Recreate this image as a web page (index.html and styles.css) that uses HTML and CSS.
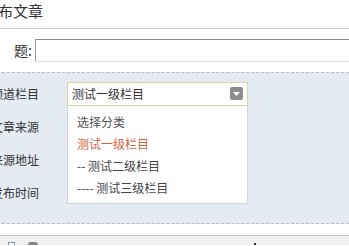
FILE: index.html
```html
<!DOCTYPE html>
<html lang="zh-CN">
<head>
<meta charset="utf-8">
<title>发布文章</title>
<link rel="stylesheet" href="styles.css">
</head>
<body>
<div class="page">
  <div class="header"><h1 class="title">发布文章</h1></div>
  <div class="title-row">
    <label class="title-label">标　题:</label>
    <div class="title-input"></div>
  </div>
  <div class="section">
    <div class="row">
      <span class="label">频道栏目</span>
      <div class="select-wrap">
        <div class="select">
          <span class="select-text">测试一级栏目</span>
          <span class="select-btn"><svg width="7" height="4" viewBox="0 0 7 4"><path d="M0 0H7L3.5 4Z" fill="#fff"/></svg></span>
        </div>
        <ul class="dropdown">
          <li class="opt opt-placeholder">选择分类</li>
          <li class="opt opt-active">测试一级栏目</li>
          <li class="opt">-- 测试二级栏目</li>
          <li class="opt">---- 测试三级栏目</li>
        </ul>
      </div>
    </div>
    <div class="row"><span class="label">文章来源</span></div>
    <div class="row"><span class="label">来源地址</span></div>
    <div class="row"><span class="label">发布时间</span></div>
  </div>
  <div class="gap"></div>
  <div class="toolbar">
    <span class="tb-icon tb-doc"></span>
    <span class="tb-icon tb-dark"></span>
    <span class="tb-spacer"></span>
    <span class="tb-dot"></span>
  </div>
</div>
</body>
</html>
```
FILE: styles.css
```css
html, body {
  margin: 0;
  padding: 0;
  background: #fff;
}
body {
  width: 349px;
  height: 246px;
  overflow: hidden;
  font-family: "Noto Sans CJK SC", "Liberation Sans", sans-serif;
  color: #333;
}
.page {
  margin-left: -18px;
  width: 367px;
  overflow: hidden;
}
.header {
  height: 28px;
  border-bottom: 1px solid #cfcfcf;
}
.title {
  margin: 0;
  padding-left: 1px;
  font-size: 15px;
  font-weight: normal;
  line-height: 22px;
  color: #333;
}
.title-row {
  display: flex;
  align-items: center;
  padding: 10px 0;
}
.title-label {
  width: 50px;
  text-align: right;
  font-size: 14px;
  line-height: 23px;
  color: #333;
  white-space: nowrap;
  flex: none;
}
.title-input {
  margin-left: 3px;
  flex: 1;
  margin-right: -4px;
  height: 23px;
  box-sizing: border-box;
  border: 1px solid #e0e0e0;
  border-top-color: #8a8a8a;
  border-left-color: #9a9a9a;
  background: #fff;
}
.section {
  border-top: 1px dashed #b9c3ce;
  border-bottom: 1px dashed #b9c3ce;
  background: #e4ebf2;
  padding: 4px 0 14px;
}
.row {
  display: flex;
  align-items: center;
  height: 33px;
}
.label {
  width: 57px;
  text-align: right;
  font-size: 12px;
  color: #333;
  flex: none;
}
.select-wrap {
  position: relative;
  margin-left: 28px;
}
.select {
  width: 181px;
  height: 24px;
  box-sizing: border-box;
  border: 1px solid #dbd3a3;
  background: #fff;
  display: flex;
  align-items: center;
  justify-content: space-between;
  padding: 0 4px 0 4px;
}
.select-text {
  font-size: 12px;
  color: #333;
}
.select-btn {
  width: 13px;
  height: 13px;
  border-radius: 2px;
  background: #8d8d8d;
  display: flex;
  align-items: center;
  justify-content: center;
}
.dropdown {
  position: absolute;
  left: 0;
  top: 24px;
  width: 181px;
  box-sizing: border-box;
  margin: 0;
  padding: 5px 0 4px 9px;
  list-style: none;
  background: #fff;
  border: 1px solid #d4d4d4;
  border-top: none;
  z-index: 2;
}
.opt {
  font-size: 12px;
  line-height: 22px;
  color: #444;
  white-space: nowrap;
}
.opt-placeholder {
  color: #555;
}
.opt-active {
  color: #d3643f;
}
.gap {
  height: 11px;
  border-bottom: 1px solid #c8c8c8;
}
.toolbar {
  display: flex;
  align-items: flex-start;
  height: 9px;
  overflow: hidden;
  background: #f1f1f1;
  padding: 6px 0 0 26px;
  box-sizing: border-box;
}
.tb-icon {
  width: 7px;
  height: 10px;
  box-sizing: border-box;
  flex: none;
}
.tb-doc {
  border: 1px solid #7a96b8;
  background: #fff;
}
.tb-dark {
  margin-left: 13px;
  width: 10px;
  border-radius: 3px 3px 0 0;
  background: #8a8580;
}
.tb-spacer {
  width: 216px;
  flex: none;
}
.tb-dot {
  width: 2px;
  height: 4px;
  margin-top: 1px;
  background: #333;
  flex: none;
}
```
